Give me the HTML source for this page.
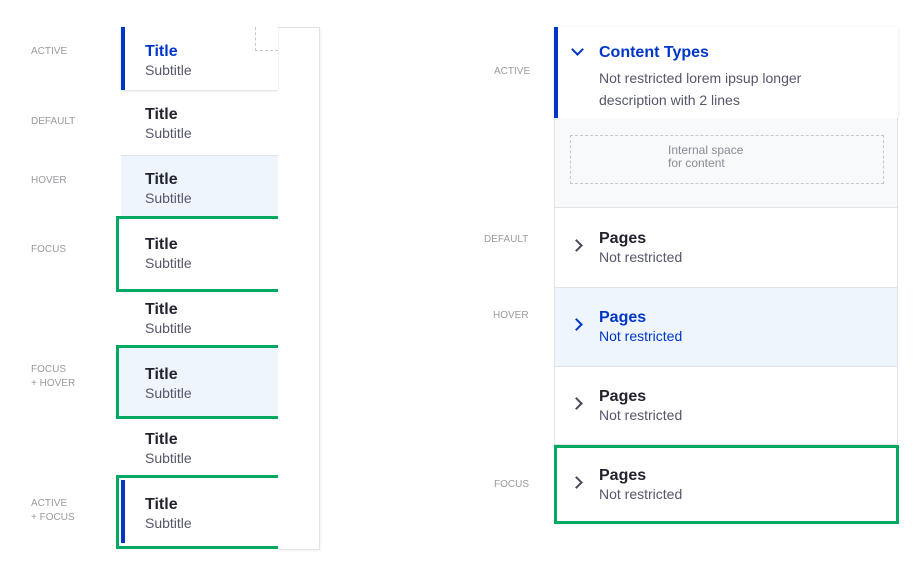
<html><head><style>
body{margin:0;width:919px;height:581px;background:#fff;font-family:"Liberation Sans",sans-serif;position:relative;overflow:hidden}
.a{position:absolute}
.lbl{position:absolute;font-size:10px;color:#9a9a9f;line-height:14px}
.t{position:absolute;font-size:16px;font-weight:bold;color:#23232f;margin-top:2px}
.s{position:absolute;font-size:14px;color:#55566a}
.chev{position:absolute;width:7px;height:7px;border-right:2px solid #4a4a58;border-top:2px solid #4a4a58;transform:rotate(45deg)}
</style></head><body>
<div class="lbl" style="left:31px;top:45px">ACTIVE</div>
<div class="lbl" style="left:31px;top:115px">DEFAULT</div>
<div class="lbl" style="left:31px;top:174px">HOVER</div>
<div class="lbl" style="left:31px;top:243px">FOCUS</div>
<div class="lbl" style="left:31px;top:363px">FOCUS<br>+ HOVER</div>
<div class="lbl" style="left:31px;top:497px">ACTIVE<br>+ FOCUS</div>

<div class="a" style="left:278px;top:27px;width:41px;height:521px;border:1px solid #e2e3e8;border-left:none;box-shadow:1px 1px 3px rgba(0,0,0,.05)"></div>
<div class="a" style="left:121px;top:27px;width:157px;height:63px;background:#fff;box-shadow:0 1px 2px rgba(0,0,0,.15)"></div>
<div class="a" style="left:121px;top:27px;width:4px;height:63px;background:#0036c8"></div>
<div class="a" style="left:255px;top:27px;width:22px;height:23px;border:1px dashed #c8c8cc;border-right:none;border-top:none"></div>
<div class="a" style="left:121px;top:155px;width:157px;height:61px;background:#eef5fd;border-top:1px solid #e2e3e8"></div>
<div class="a" style="left:116px;top:216px;width:159px;height:70px;border:3px solid #00a862;border-right:none"></div>
<div class="a" style="left:116px;top:345px;width:159px;height:68px;border:3px solid #00a862;border-right:none;background:#eef5fd"></div>
<div class="a" style="left:116px;top:475px;width:159px;height:68px;border:3px solid #00a862;border-right:none"></div>
<div class="a" style="left:121px;top:480px;width:4px;height:63px;background:#0036c8"></div>

<div class="t" style="left:145px;top:41px;color:#0036c8">Title</div><div class="s" style="left:145px;top:62px">Subtitle</div>
<div class="t" style="left:145px;top:104px">Title</div><div class="s" style="left:145px;top:125px">Subtitle</div>
<div class="t" style="left:145px;top:169px">Title</div><div class="s" style="left:145px;top:190px">Subtitle</div>
<div class="t" style="left:145px;top:234px">Title</div><div class="s" style="left:145px;top:255px">Subtitle</div>
<div class="t" style="left:145px;top:299px">Title</div><div class="s" style="left:145px;top:320px">Subtitle</div>
<div class="t" style="left:145px;top:364px">Title</div><div class="s" style="left:145px;top:385px">Subtitle</div>
<div class="t" style="left:145px;top:429px">Title</div><div class="s" style="left:145px;top:450px">Subtitle</div>
<div class="t" style="left:145px;top:494px">Title</div><div class="s" style="left:145px;top:515px">Subtitle</div>

<div class="lbl" style="left:494px;top:65px">ACTIVE</div>
<div class="lbl" style="left:484px;top:233px">DEFAULT</div>
<div class="lbl" style="left:493px;top:309px">HOVER</div>
<div class="lbl" style="left:494px;top:478px">FOCUS</div>

<div class="a" style="left:554px;top:27px;width:344px;height:418px;border:1px solid #e2e3e8;box-sizing:border-box"></div>
<div class="a" style="left:554px;top:27px;width:344px;height:91px;background:#fff;box-shadow:0 1px 3px rgba(0,0,0,.12)"></div>
<div class="a" style="left:554px;top:27px;width:4px;height:91px;background:#0036c8"></div>
<div class="a" style="left:555px;top:118px;width:342px;height:89px;background:#f8f9fb;border-bottom:1px solid #e2e3e8"></div>
<div class="a" style="left:570px;top:135px;width:312px;height:47px;border:1px dashed #c8c8cc"></div>
<div class="a" style="left:668px;top:144px;font-size:12px;color:#8a8a94;line-height:13px">Internal space<br>for content</div>
<div class="a" style="left:555px;top:287px;width:342px;height:78px;background:#eef5fd;border-top:1px solid #e2e3e8;border-bottom:1px solid #e2e3e8"></div>
<div class="a" style="left:554px;top:445px;width:339px;height:73px;border:3px solid #00a862;background:#fff"></div>

<div class="chev" style="left:573px;top:45px;transform:rotate(135deg);border-color:#0036c8"></div>
<div class="t" style="left:599px;top:42px;color:#0036c8">Content Types</div>
<div class="s" style="left:599px;top:67px;line-height:22px">Not restricted lorem ipsup longer<br>description with 2 lines</div>

<div class="chev" style="left:572px;top:241px"></div>
<div class="t" style="left:599px;top:228px">Pages</div><div class="s" style="left:599px;top:249px">Not restricted</div>
<div class="chev" style="left:572px;top:320px;border-color:#0036c8"></div>
<div class="t" style="left:599px;top:307px;color:#0036c8">Pages</div><div class="s" style="left:599px;top:328px;color:#0036c8">Not restricted</div>
<div class="chev" style="left:572px;top:399px"></div>
<div class="t" style="left:599px;top:386px">Pages</div><div class="s" style="left:599px;top:407px">Not restricted</div>
<div class="chev" style="left:572px;top:478px"></div>
<div class="t" style="left:599px;top:465px">Pages</div><div class="s" style="left:599px;top:486px">Not restricted</div>
</body></html>
